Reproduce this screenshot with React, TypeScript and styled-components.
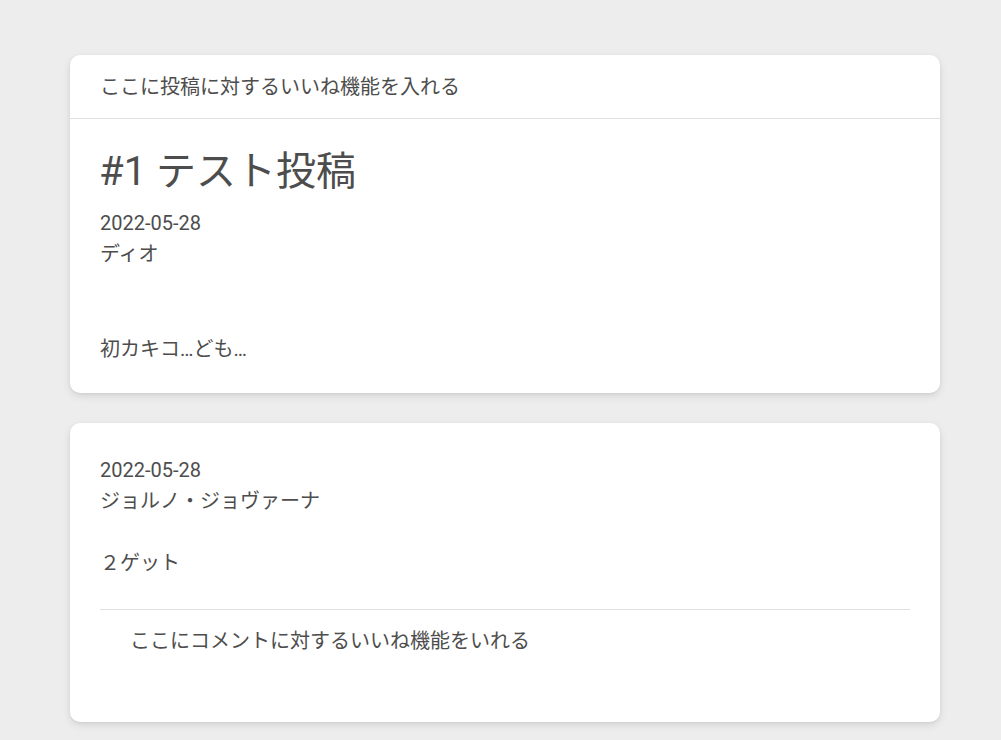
import React from 'react';
import styled, { createGlobalStyle } from 'styled-components';

const GlobalStyle = createGlobalStyle`
  body {
    margin: 0;
    background: #ededed;
    font-family: Roboto, "Noto Sans CJK JP", sans-serif;
    color: #4d4d4d;
  }
`;

type Comment = {
  date: string;
  author: string;
  body: string;
};

const comments: Comment[] = [
  { date: '2022-05-28', author: 'ジョルノ・ジョヴァーナ', body: '２ゲット' },
];

// Component
function App() {
  return (
    <>
      <GlobalStyle />
      <StyledPage>
        <StyledCard>
          <StyledCardHeader>ここに投稿に対するいいね機能を入れる</StyledCardHeader>
          <StyledCardBody>
            <StyledTitle>#1 テスト投稿</StyledTitle>
            <StyledMeta>
              <StyledLine>2022-05-28</StyledLine>
              <StyledLine>ディオ</StyledLine>
            </StyledMeta>
            <StyledText $gap={64}>初カキコ…ども…</StyledText>
          </StyledCardBody>
        </StyledCard>

        {comments.map((c, i) => (
          <StyledCard key={i}>
            <StyledCardBody $top={32}>
              <StyledMeta $first>
                <StyledLine>{c.date}</StyledLine>
                <StyledLine>{c.author}</StyledLine>
              </StyledMeta>
              <StyledText $gap={31}>{c.body}</StyledText>
              <StyledDivider />
              <StyledCommentLike>ここにコメントに対するいいね機能をいれる</StyledCommentLike>
            </StyledCardBody>
          </StyledCard>
        ))}
      </StyledPage>
    </>
  );
}

// Styled components
const StyledPage = styled.main`
  display: flex;
  flex-direction: column;
  gap: 30px;
  padding: 55px 61px 10px 70px;
`;

const StyledCard = styled.section`
  background: #fff;
  border-radius: 10px;
  box-shadow:
    0 3px 8px rgba(0, 0, 0, 0.1),
    0 1px 3px rgba(0, 0, 0, 0.06);
  overflow: hidden;
`;

const StyledCardHeader = styled.header`
  display: flex;
  align-items: center;
  height: 63px;
  padding: 0 30px;
  border-bottom: 1px solid #e0e0e0;
  font-size: 20px;
  line-height: 30px;
`;

const StyledCardBody = styled.div<{ $top?: number }>`
  display: flex;
  flex-direction: column;
  padding: ${(p) => p.$top ?? 29}px 30px 29px;
`;

const StyledTitle = styled.h1`
  margin: 0 0 0 -1px;
  font-size: 40px;
  font-weight: 400;
  line-height: 48px;
`;

const StyledMeta = styled.div<{ $first?: boolean }>`
  display: flex;
  flex-direction: column;
  margin-top: ${(p) => (p.$first ? 0 : 12)}px;
`;

const StyledLine = styled.div`
  font-size: 20px;
  line-height: 31px;
  white-space: nowrap;
`;

const StyledText = styled.p<{ $gap: number }>`
  margin: ${(p) => p.$gap}px 0 0;
  font-size: 20px;
  line-height: 30px;
`;

const StyledDivider = styled.hr`
  margin: 31px 0 0;
  border: 0;
  border-top: 1px solid #e0e0e0;
`;

const StyledCommentLike = styled.div`
  padding: 16px 30px 37px;
  font-size: 20px;
  line-height: 30px;
`;

export default App;
